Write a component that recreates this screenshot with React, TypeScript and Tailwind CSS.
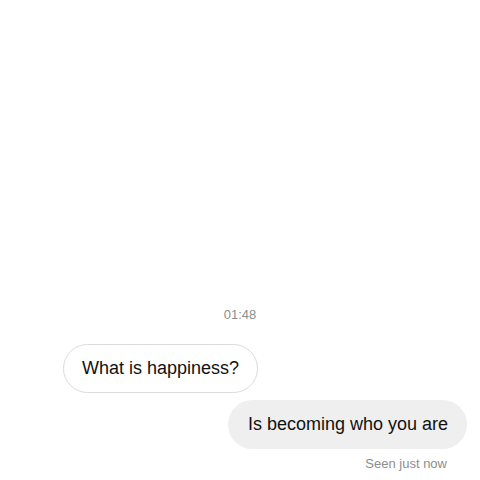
export default function App() {
  return (
    <div
      className="w-[480px] h-[480px] bg-white flex flex-col justify-end pb-[8px]"
      style={{ fontFamily: '"Liberation Sans", Arial, sans-serif' }}
    >
      <div className="text-center text-[13px] leading-[16px] text-[#8e8e8e] mb-[21px]">
        01:48
      </div>

      <div className="flex pl-[63px]">
        <div className="h-[49px] px-[18px] flex items-center rounded-full border border-[#dbdbdb] text-[18px] text-[#111]">
          What is happiness?
        </div>
      </div>

      <div className="flex justify-end pr-[13px] mt-[7px]">
        <div className="h-[49px] pl-[20px] pr-[19px] flex items-center rounded-full bg-[#efefef] text-[18px] text-[#111]">
          Is becoming who you are
        </div>
      </div>

      <div className="text-right pr-[33px] mt-[7px] text-[13px] leading-[16px] text-[#8e8e8e]">
        Seen just now
      </div>
    </div>
  );
}
